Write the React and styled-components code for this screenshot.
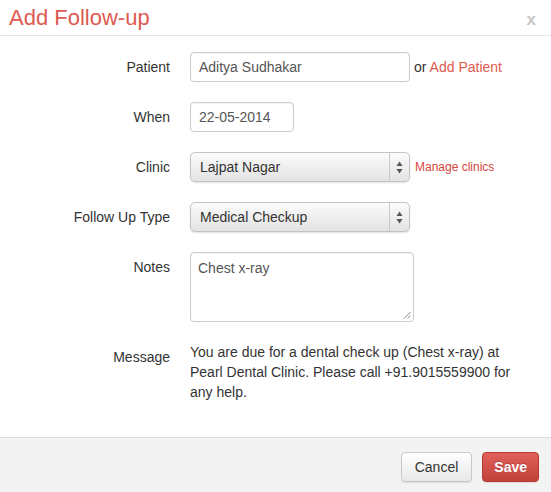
import React from "react";
import styled, { createGlobalStyle } from "styled-components";

const GlobalStyle = createGlobalStyle`
  html, body {
    margin: 0;
    padding: 0;
    background: #fff;
  }
  body {
    font-family: "Liberation Sans", Arial, sans-serif;
    font-size: 14px;
    line-height: 20px;
    color: #333;
  }
`;

const Modal = styled.div`
  width: 551px;
  height: 492px;
  display: flex;
  flex-direction: column;
  background: #fff;
  overflow: hidden;
`;

const Header = styled.div`
  height: 35px;
  border-bottom: 1px solid #e5e5e5;
  display: flex;
  align-items: center;
  justify-content: space-between;
  padding: 0 15px 0 9px;
  box-sizing: content-box;
  flex: none;
`;

const Title = styled.h3`
  margin: 0;
  font-size: 22px;
  font-weight: normal;
  line-height: 30px;
  color: #dd5a50;
  padding-top: 1px;
`;

const Close = styled.button`
  border: 0;
  background: none;
  padding: 0;
  font-family: "Liberation Sans", Arial, sans-serif;
  font-size: 17px;
  font-weight: bold;
  line-height: 20px;
  color: #c8c8c8;
  cursor: pointer;
  margin-top: 4px;
`;

const Body = styled.div`
  flex: 1;
  padding: 16px 0 0;
`;

const Row = styled.div`
  display: flex;
  align-items: flex-start;
  gap: 20px;
  margin-bottom: 20px;
`;

const Label = styled.label`
  width: 170px;
  flex: none;
  text-align: right;
  padding-top: ${(p) => (p.$top ? p.$top : 5)}px;
  color: #333;
`;

const Controls = styled.div`
  display: flex;
  align-items: center;
  gap: ${(p) => p.$gap || 4}px;
  min-height: 30px;
`;

const Input = styled.div`
  box-sizing: border-box;
  width: ${(p) => p.$width}px;
  height: 30px;
  border: 1px solid #ccc;
  border-radius: 4px;
  padding: 4px 8px;
  color: #555;
  box-shadow: inset 0 1px 1px rgba(0, 0, 0, 0.05);
  white-space: nowrap;
`;

const Select = styled.div`
  box-sizing: border-box;
  width: 220px;
  height: 30px;
  border: 1px solid #c4c4c4;
  border-radius: 5px;
  background: linear-gradient(#fbfbfb, #e3e3e3);
  box-shadow: 0 1px 2px rgba(0, 0, 0, 0.12);
  display: flex;
  align-items: stretch;
  color: #333;
`;

const SelectText = styled.div`
  flex: 1;
  padding: 4px 9px;
`;

const SelectArrows = styled.div`
  width: 19px;
  border-left: 1px solid #c9c9c9;
  display: flex;
  align-items: center;
  justify-content: center;
`;

const Link = styled.a`
  color: ${(p) => (p.$small ? "#d4463c" : "#dd5a50")};
  font-size: ${(p) => (p.$small ? 12 : 14)}px;
  text-decoration: none;
  cursor: pointer;
`;

const Or = styled.span`
  color: #333;
`;

const TextArea = styled.div`
  box-sizing: border-box;
  position: relative;
  width: 224px;
  height: 70px;
  border: 1px solid #ccc;
  border-radius: 4px;
  padding: 5px 7px;
  color: #555;
  box-shadow: inset 0 1px 1px rgba(0, 0, 0, 0.05);
`;

const Grip = styled.svg`
  position: absolute;
  right: 2px;
  bottom: 2px;
`;

const Message = styled.p`
  margin: 0;
  width: 330px;
  color: #333;
`;

const Footer = styled.div`
  flex: none;
  height: 55px;
  border-top: 1px solid #ddd;
  background: #f3f3f3;
  display: flex;
  justify-content: flex-end;
  align-items: flex-start;
  gap: 10px;
  padding: 14px 12px 0 0;
  box-sizing: border-box;
`;

const Button = styled.button`
  box-sizing: border-box;
  height: 30px;
  padding: 0 ${(p) => (p.$primary ? 11 : 13)}px;
  border-radius: 4px;
  font-family: "Liberation Sans", Arial, sans-serif;
  font-size: 14px;
  font-weight: ${(p) => (p.$primary ? "bold" : "normal")};
  color: ${(p) => (p.$primary ? "#fff" : "#333")};
  border: 1px solid ${(p) => (p.$primary ? "#b63a32" : "#c8c8c8")};
  background: ${(p) =>
    p.$primary
      ? "linear-gradient(#e0605a, #c1403a)"
      : "linear-gradient(#fff, #e8e8e8)"};
  box-shadow: 0 1px 1px rgba(0, 0, 0, 0.1);
  text-shadow: ${(p) => (p.$primary ? "0 -1px 0 rgba(0,0,0,0.2)" : "none")};
  cursor: pointer;
`;

const Arrows = () => (
  <svg width="7" height="13" viewBox="0 0 7 13">
    <path d="M3.5 0.5 L6.5 5 L0.5 5 Z" fill="#555" />
    <path d="M3.5 12.5 L6.5 8 L0.5 8 Z" fill="#555" />
  </svg>
);

const DropDown = ({ value }) => (
  <Select>
    <SelectText>{value}</SelectText>
    <SelectArrows>
      <Arrows />
    </SelectArrows>
  </Select>
);

export default function App() {
  return (
    <>
      <GlobalStyle />
      <Modal>
        <Header>
          <Title>Add Follow-up</Title>
          <Close>x</Close>
        </Header>
        <Body>
          <Row>
            <Label>Patient</Label>
            <Controls>
              <Input $width={220}>Aditya Sudhakar</Input>
              <span>
                <Or>or </Or>
                <Link>Add Patient</Link>
              </span>
            </Controls>
          </Row>
          <Row>
            <Label>When</Label>
            <Controls>
              <Input $width={104}>22-05-2014</Input>
            </Controls>
          </Row>
          <Row>
            <Label>Clinic</Label>
            <Controls $gap={5}>
              <DropDown value="Lajpat Nagar" />
              <Link $small>Manage clinics</Link>
            </Controls>
          </Row>
          <Row>
            <Label>Follow Up Type</Label>
            <Controls>
              <DropDown value="Medical Checkup" />
            </Controls>
          </Row>
          <Row>
            <Label>Notes</Label>
            <TextArea>
              Chest x-ray
              <Grip width="8" height="8" viewBox="0 0 8 8">
                <path d="M7.5 1 L1 7.5 M7.5 4.5 L4.5 7.5" stroke="#888" strokeWidth="1" />
              </Grip>
            </TextArea>
          </Row>
          <Row>
            <Label $top={5}>Message</Label>
            <Message>
              You are due for a dental check up (Chest x-ray) at Pearl Dental
              Clinic. Please call +91.9015559900 for any help.
            </Message>
          </Row>
        </Body>
        <Footer>
          <Button>Cancel</Button>
          <Button $primary>Save</Button>
        </Footer>
      </Modal>
    </>
  );
}
